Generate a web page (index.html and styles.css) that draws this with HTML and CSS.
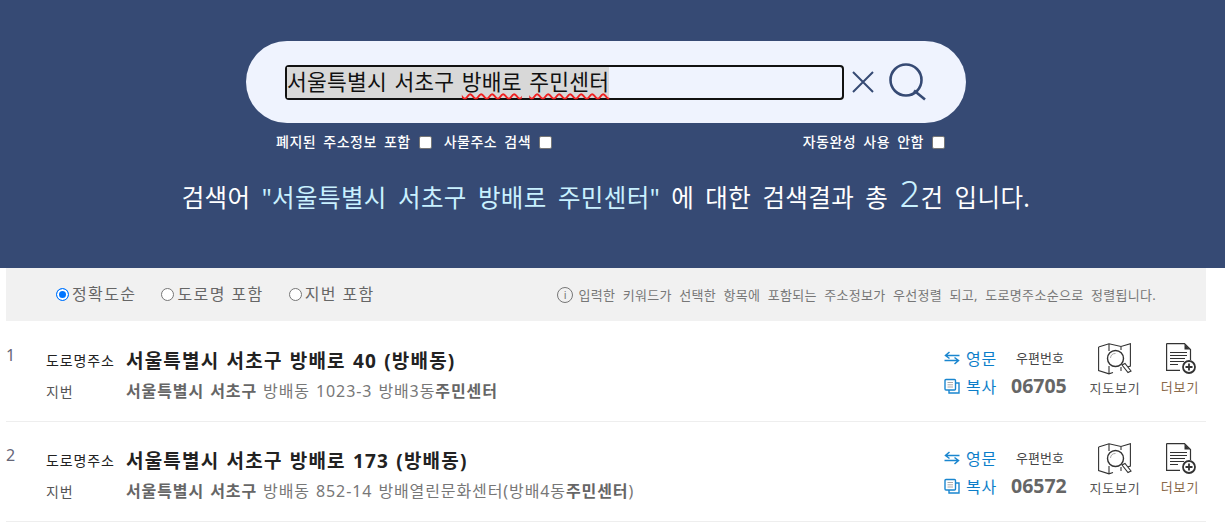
FILE: index.html
```html
<!DOCTYPE html>
<html lang="ko">
<head>
<meta charset="utf-8">
<title>도로명주소 검색</title>
<link rel="stylesheet" href="styles.css">
</head>
<body>
<header class="hero">
  <div class="search">
    <div class="field"><span class="sel">서울특별시 서초구 <span class="typo">방배로</span> <span class="typo">주민센터</span></span></div>
    <svg class="clear" viewBox="0 0 22 22" width="22" height="22"><path d="M1 1 21 21M21 1 1 21" fill="none" stroke="#364a74" stroke-width="2"/></svg>
    <svg class="find" viewBox="0 0 38 38" width="38" height="38"><circle cx="17" cy="17" r="15.500" fill="none" stroke="#364a74" stroke-width="2.600"/><path d="M25 27.500 36 36.500" fill="none" stroke="#364a74" stroke-width="2.600"/></svg>
  </div>
  <div class="opts">
    <div class="opt-left">
      <label class="opt">폐지된 주소정보 포함<span class="box"></span></label>
      <label class="opt">사물주소 검색<span class="box"></span></label>
    </div>
    <label class="opt">자동완성 사용 안함<span class="box"></span></label>
  </div>
  <p class="summary">검색어 <span class="hl">"서울특별시 서초구 방배로 주민센터"</span> 에 대한 검색결과 총 <span class="num">2</span>건 입니다.</p>
</header>

<section class="filter">
  <div class="radios">
    <label class="radio"><span class="dot on"></span>정확도순</label>
    <label class="radio"><span class="dot"></span>도로명 포함</label>
    <label class="radio"><span class="dot"></span>지번 포함</label>
  </div>
  <div class="hint"><span class="info">i</span>입력한 키워드가 선택한 항목에 포함되는 주소정보가 우선정렬 되고, 도로명주소순으로 정렬됩니다.</div>
</section>

<main class="list">
  <article class="row">
    <div class="idx">1</div>
    <div class="addr">
      <div class="line1"><span class="tag dark">도로명주소</span><strong class="road">서울특별시 서초구 방배로 40 (방배동)</strong></div>
      <div class="line2"><span class="tag">지번</span><span class="jibun"><b>서울특별시 서초구</b> 방배동 1023-3 방배3동<b>주민센터</b></span></div>
    </div>
    <div class="actions">
      <div class="links">
        <a class="link"><svg viewBox="0 0 16 14" width="16" height="14"><path d="M5.500 1 1.500 4.500 5.500 7.500M1.500 4.500H15.500M10.500 6.500 14.500 9.500 10.500 13M14.500 9.500H.5" fill="none" stroke="#1a86cf" stroke-width="1.500"/></svg>영문</a>
        <a class="link"><svg viewBox="0 0 16 16" width="16" height="16"><path d="M12 5H15V15H5V12" fill="none" stroke="#1a86cf" stroke-width="1.400"/><rect x="1" y="1.500" width="10.500" height="10.500" rx="1" fill="#fff" stroke="#1a86cf" stroke-width="1.400"/><path d="M3.500 4.500H9M3.500 6.800H9M3.500 9H9" stroke="#a9a9a9" stroke-width="1"/></svg>복사</a>
      </div>
      <div class="zip"><span class="zip-label">우편번호</span><span class="zip-code">06705</span></div>
      <a class="tool map"><svg viewBox="0 0 35 32" width="35" height="32"><path d="M.6 4 11 .7 23 3.500 32.400.7V23L29 24.300M.6 4V27.500L11 30.800 15 29.500M11 .7V8M11 23V30.800M23 3.500V7M23 24V28" fill="none" stroke="#333" stroke-width="1.100"/><circle cx="17.500" cy="15.500" r="8" fill="#fff" stroke="#333" stroke-width="1.400"/><path d="M12.500 15A5 5 0 0 1 17.500 10.500" fill="none" stroke="#aaa"/><path d="M24 22 30 29.500 33 28 27 20.500Z" fill="#fff" stroke="#333" stroke-width="1.100"/></svg><span>지도보기</span></a>
      <a class="tool more"><svg viewBox="0 0 31 31" width="31" height="31"><path d="M.6.6H18.500L24.500 6.500V17M.6.6V27.400H14" fill="none" stroke="#333" stroke-width="1.200"/><path d="M18.500 1V6.500H24Z" fill="#333"/><path d="M4 9.500H21M4 12.500H21M4 15.500H19M4 18.500H18M4 21.500H12" stroke="#333" stroke-width="1.100"/><circle cx="23" cy="24" r="6" fill="#fff" stroke="#333" stroke-width="1.800"/><path d="M19.500 24H26.500M23 20.500V27.500" stroke="#333" stroke-width="1.800"/></svg><span>더보기</span></a>
    </div>
  </article>
  <article class="row">
    <div class="idx">2</div>
    <div class="addr">
      <div class="line1"><span class="tag dark">도로명주소</span><strong class="road">서울특별시 서초구 방배로 173 (방배동)</strong></div>
      <div class="line2"><span class="tag">지번</span><span class="jibun"><b>서울특별시 서초구</b> 방배동 852-14 방배열린문화센터(방배4동<b>주민센터</b>)</span></div>
    </div>
    <div class="actions">
      <div class="links">
        <a class="link"><svg viewBox="0 0 16 14" width="16" height="14"><path d="M5.500 1 1.500 4.500 5.500 7.500M1.500 4.500H15.500M10.500 6.500 14.500 9.500 10.500 13M14.500 9.500H.5" fill="none" stroke="#1a86cf" stroke-width="1.500"/></svg>영문</a>
        <a class="link"><svg viewBox="0 0 16 16" width="16" height="16"><path d="M12 5H15V15H5V12" fill="none" stroke="#1a86cf" stroke-width="1.400"/><rect x="1" y="1.500" width="10.500" height="10.500" rx="1" fill="#fff" stroke="#1a86cf" stroke-width="1.400"/><path d="M3.500 4.500H9M3.500 6.800H9M3.500 9H9" stroke="#a9a9a9" stroke-width="1"/></svg>복사</a>
      </div>
      <div class="zip"><span class="zip-label">우편번호</span><span class="zip-code">06572</span></div>
      <a class="tool map"><svg viewBox="0 0 35 32" width="35" height="32"><path d="M.6 4 11 .7 23 3.500 32.400.7V23L29 24.300M.6 4V27.500L11 30.800 15 29.500M11 .7V8M11 23V30.800M23 3.500V7M23 24V28" fill="none" stroke="#333" stroke-width="1.100"/><circle cx="17.500" cy="15.500" r="8" fill="#fff" stroke="#333" stroke-width="1.400"/><path d="M12.500 15A5 5 0 0 1 17.500 10.500" fill="none" stroke="#aaa"/><path d="M24 22 30 29.500 33 28 27 20.500Z" fill="#fff" stroke="#333" stroke-width="1.100"/></svg><span>지도보기</span></a>
      <a class="tool more"><svg viewBox="0 0 31 31" width="31" height="31"><path d="M.6.6H18.500L24.500 6.500V17M.6.6V27.400H14" fill="none" stroke="#333" stroke-width="1.200"/><path d="M18.500 1V6.500H24Z" fill="#333"/><path d="M4 9.500H21M4 12.500H21M4 15.500H19M4 18.500H18M4 21.500H12" stroke="#333" stroke-width="1.100"/><circle cx="23" cy="24" r="6" fill="#fff" stroke="#333" stroke-width="1.800"/><path d="M19.500 24H26.500M23 20.500V27.500" stroke="#333" stroke-width="1.800"/></svg><span>더보기</span></a>
    </div>
  </article>
</main>
</body>
</html>
```
FILE: styles.css
```css
* { box-sizing: border-box; }
html, body { height: 530px; overflow: hidden; }
body { margin: 0; background: #fff; font-family: "Noto Sans", "Noto Sans CJK KR", sans-serif; color: #333; }

.hero { height: 268px; background: #364a74; padding-top: 41px; }
.search { width: 720px; height: 82px; margin-left: 246px; background: #eff3fe; border-radius: 41px; display: flex; align-items: center; padding-left: 39px; }
.field { width: 559px; height: 35px; border: 2px solid #111; border-radius: 4px; font-size: 21.500px; letter-spacing: .2px; word-spacing: 1.700px; line-height: 30px; color: #111; white-space: nowrap; }
.sel { display: inline-block; background: #d8d8d8; height: 31px; }
.typo { text-decoration: underline wavy #f02020 1.500px; text-underline-offset: 3px; }
.clear { margin-left: 8px; }
.find { margin-left: 15px; margin-top: -1px; }

.opts { display: flex; justify-content: space-between; width: 669px; margin: 9px 0 0 276px; }
.opt-left { display: flex; gap: 12px; }
.opt { display: flex; align-items: center; font-size: 14px; font-weight: 500; letter-spacing: .5px; word-spacing: 3px; line-height: 20px; color: #fff; }
.box { width: 13px; height: 13px; margin-left: 8px; background: #fff; border: 1px solid #767676; border-radius: 2px; }

.summary { margin: 22px 0 0; width: 1212px; text-align: center; font-size: 24.500px; letter-spacing: .4px; word-spacing: 4.400px; line-height: 48px; height: 48px; color: #fff; white-space: nowrap; }
.hl { color: #c9f1ff; }
.num { font-size: 36px; font-weight: 300; color: #c9f1ff; line-height: 36px; }

.filter { width: 1200px; height: 53px; margin-left: 6px; background: #f1f1f1; display: flex; align-items: center; justify-content: space-between; padding: 0 50px; }
.radios { display: flex; gap: 25px; margin-bottom: 4px; }
.radio { display: flex; align-items: center; font-size: 16px; letter-spacing: 1.400px; color: #666; }
.dot { width: 13px; height: 13px; margin: 4px 3px 0 0; border: 1px solid #767676; border-radius: 50%; background: #fff; }
.dot.on { border: 1px solid #0075ff; box-shadow: inset 0 0 0 2px #fff; background: #0075ff; }
.hint { display: flex; align-items: center; font-size: 13px; letter-spacing: .3px; word-spacing: 3.800px; color: #777; }
.info { width: 16px; height: 16px; margin-right: 5px; border: 1px solid #777; border-radius: 50%; font-size: 11px; line-height: 14px; text-align: center; }

.list { margin: 1px 19px 0 6px; }
.row { height: 100px; border-bottom: 1px solid #eee; display: flex; padding-top: 21px; }
.idx { width: 40px; font-size: 16px; color: #667; line-height: 24px; }
.addr { flex: 1; }
.line1, .line2 { display: flex; align-items: center; }
.line1 { height: 34px; }
.line2 { height: 26px; }
.tag { width: 80px; font-size: 14px; letter-spacing: .9px; color: #555; }
.tag.dark { color: #222; padding-bottom: 1px; }
.line2 .tag { padding-top: 2px; }
.road { font-size: 19px; letter-spacing: 1.200px; word-spacing: 1px; font-weight: 700; color: #222; }
.jibun { font-size: 16px; letter-spacing: .9px; word-spacing: 1px; color: #777; }
.jibun b { font-weight: 700; color: #666; }

.actions { display: flex; margin-right: 7px; }
.links { display: flex; flex-direction: column; width: 67px; margin-top: 1px; }
.link { display: flex; align-items: center; gap: 6px; height: 28px; font-size: 16px; letter-spacing: .8px; color: #0b7ec9; }
.zip { display: flex; flex-direction: column; width: 78px; margin-top: 1px; }
.zip-label { height: 28px; line-height: 28px; font-size: 13px; color: #444; padding-left: 5px; }
.zip-code { font-size: 19.500px; font-weight: 700; color: #666; line-height: 28px; }
.tool { display: flex; flex-direction: column; align-items: center; font-size: 13px; letter-spacing: .8px; line-height: 16px; white-space: nowrap; }
.tool svg { margin-bottom: 5px; }
.map { width: 52px; color: #555; margin-right: 20px; }
.more { width: 38px; color: #8a6a4a; }
.more svg { margin-left: 2px; }
```
